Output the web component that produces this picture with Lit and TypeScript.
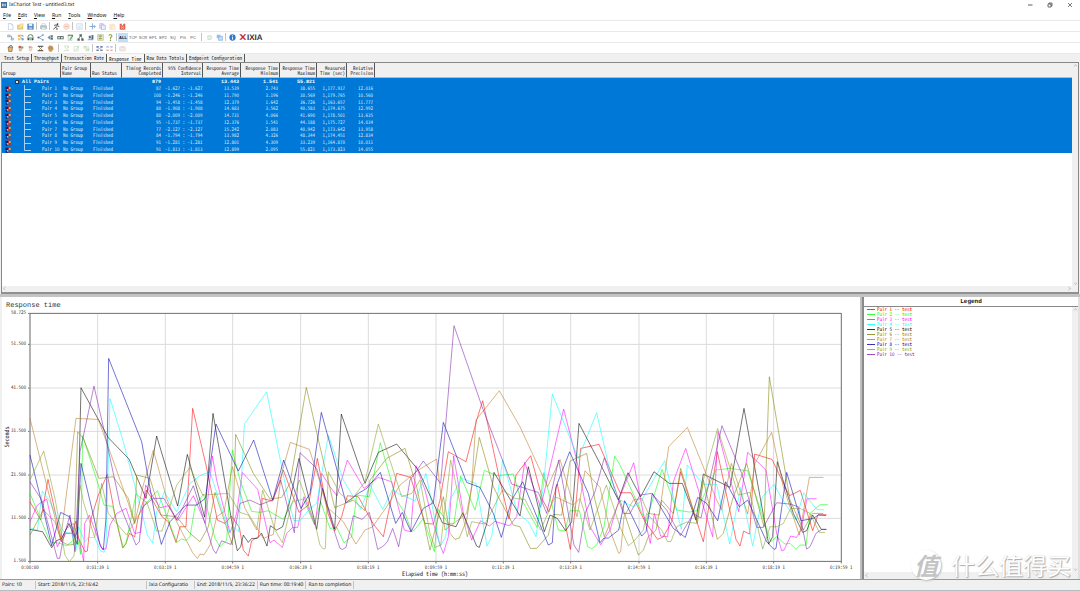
import { LitElement, html, svg, css } from "lit";
import { customElement, property, state } from "lit/decorators.js";

/* ---------- icons, drawn on a 20 x 20 grid ---------- */
const ICONS: Record<string, unknown> = {
  newFile: svg`<path d="M4 1h8l5 5v13H4z" fill="#fdfeff" stroke="#9fb6d6" stroke-width="1.5"/><path d="M12 1v5h5" fill="#cfe0f5" stroke="#9fb6d6"/>`,
  open: svg`<path d="M1 6h6l2 2h8v10H1z" fill="#f3d57c" stroke="#c9a23c"/><path d="M8 3l10-1-2 9-12 6z" fill="#f9e7a8" stroke="#d6b45a"/>`,
  save: svg`<path d="M1 2h18v17H1z" fill="#4d84bd"/><path d="M5 2h10v7H5z" fill="#e6f0fa"/><path d="M5 12h10v7H5z" fill="#a8c5e2"/>`,
  print: svg`<path d="M5 2h10v6H5z" fill="#fff" stroke="#8c9bb0"/><path d="M1 8h18v8H1z" fill="#c3cbd6" stroke="#7c8aa0"/><path d="M4 12h12v6H4z" fill="#e8f4ea" stroke="#7fb58b"/>`,
  run: svg`<circle cx="13" cy="3" r="2.4" fill="#333"/><path d="M3 7l7-2 3 4 5 1M11 7l-4 6 5 2-1 5M7 13l-6 5" fill="none" stroke="#333" stroke-width="2.2"/>`,
  stop: svg`<circle cx="10" cy="10" r="8" fill="#fbe3dd" stroke="#f6c8bd" stroke-width="2.2"/><path d="M5 10h10" stroke="#f4b9ab" stroke-width="3"/>`,
  sheet: svg`<path d="M2 2h16v16H2z" fill="#f3f8fd" stroke="#b9cfe6" stroke-width="1.5"/><path d="M5 7l4 4 6-6M5 14h10" fill="none" stroke="#c3d6ea" stroke-width="1.6"/>`,
  cut: svg`<path d="M10 1v9M1 10h17M14 6l4 4-4 4M10 10v8" fill="none" stroke="#85a8d6" stroke-width="2.6"/>`,
  copy: svg`<path d="M2 2h10v13H2z" fill="#e4e6fa" stroke="#8c91cf" stroke-width="1.4"/><path d="M7 6h11v13H7z" fill="#eef0fd" stroke="#8c91cf" stroke-width="1.4"/>`,
  paste: svg`<path d="M2 4h14v14H2z" fill="#fbe9cf" stroke="#f2d3a5"/><path d="M8 9h10v9H8z" fill="#fff3e2" stroke="#f0cfa0"/>`,
  del: svg`<path d="M2 2h6v5h4V2h6v17H2z" fill="#e2604c"/><path d="M5 9l10 8M15 9L5 17" stroke="#f9d6cf" stroke-width="1.6"/>`,
  pair: svg`<path d="M2 3h6v5H2zM12 12h6v5h-6zM8 6h5v6" fill="none" stroke="#6f8cad" stroke-width="2"/>`,
  multi: svg`<path d="M2 2h8v6H2z" fill="#f0b45c"/><path d="M8 7l8 8M10 4h7v5" stroke="#5f86ba" stroke-width="2" fill="none"/><path d="M3 12h7v6H3z" fill="#f3c36f"/><path d="M13 12h6v6h-6z" fill="#6b9bd0"/>`,
  voip: svg`<path d="M3 16V8a7 6 0 0 1 14 0v8" fill="none" stroke="#55735f" stroke-width="2.6"/><path d="M6 9h8v9H6z" fill="#9bbfa5"/><path d="M2 12h4v6H2zM14 12h4v6h-4z" fill="#3c4d52"/>`,
  share: svg`<path d="M17 3L5 10l12 7" fill="none" stroke="#6a84a8" stroke-width="2"/><circle cx="4" cy="10" r="3" fill="#54739e"/><path d="M14 1h5v5h-5zM14 14h5v5h-5z" fill="#8aa4c4"/>`,
  speaker: svg`<path d="M1 10l9-7v14z" fill="#6d9a9a"/><path d="M11 4h6v12h-6z" fill="#3f5963"/><path d="M13 7h3v5h-3z" fill="#fff"/>`,
  cam: svg`<path d="M1 6h18v9H1z" fill="#52645f"/><circle cx="6" cy="10.500" r="3" fill="#d7e6df"/><circle cx="14" cy="10.500" r="3" fill="#d7e6df"/>`,
  edit: svg`<path d="M2 2h15v4H2z" fill="#5d7e62"/><path d="M3 5h11v14H3z" fill="#eef4ef" stroke="#879b8b"/><path d="M17 5l-9 11" stroke="#55a05d" stroke-width="3"/>`,
  hier: svg`<path d="M7 1h7v6H7zM1 13h7v6H1zM12 13h7v6h-7z" fill="#4c6d59"/><path d="M10 6L4 14M11 6l5 8" stroke="#57636c" stroke-width="2"/>`,
  bars: svg`<path d="M1 17l6-5 4 2 7-11v15H1z" fill="#9ab3cc"/><path d="M5 5h6v7H5zM13 3h5v12h-5z" fill="#54708c"/>`,
  swap: svg`<path d="M2 2h16v16H2z" fill="#e3efd2" stroke="#96b269" stroke-width="1.5"/><path d="M5 6h9M5 13h9" stroke="#dd8a63" stroke-width="3"/><path d="M9 4v12" stroke="#73a949" stroke-width="2"/>`,
  help: svg`<path d="M5 5q5-7 9 0-1 4-4 5v4" fill="none" stroke="#9ead4b" stroke-width="3.4"/><circle cx="10" cy="17.500" r="2" fill="#6b7a3a"/>`,
  globe: svg`<circle cx="10" cy="10" r="8" fill="#e6f3ea"/><path d="M3 8q7-6 14 0M4 14q6 4 12-1" fill="none" stroke="#b7d9c3" stroke-width="2"/>`,
  copyNet: svg`<path d="M2 2h11v10H2z" fill="#9dc0e8"/><path d="M7 7h12v11H7z" fill="#c4dcf4" stroke="#6c9dd4" stroke-width="1.5"/>`,
  info: svg`<circle cx="10" cy="10" r="9" fill="#2f7cc8"/><path d="M10 4v3M10 9v7" stroke="#fff" stroke-width="2.6"/>`,
  clipA: svg`<path d="M3 6h13l-2 13H5z" fill="#e8b765" stroke="#5e4527" stroke-width="1.5"/><path d="M5 5l6-4 5 4" fill="none" stroke="#4d3b2a" stroke-width="2.4"/>`,
  clipB: svg`<path d="M4 10h11l-2 8H6z" fill="#dbb99a"/><circle cx="8" cy="6" r="4" fill="#c8584c"/><path d="M12 4h6v6h-6z" fill="#67a868"/>`,
  clipC: svg`<path d="M4 9h12l-2 9H6z" fill="#ead8c2"/><circle cx="8" cy="6" r="3.500" fill="#e39b8b"/><path d="M12 3l5 4-5 3z" fill="#a7c77b"/>`,
  gridX: svg`<path d="M2 2h16v4H2zM2 14h16v4H2z" fill="#56606f"/><path d="M5 5l10 10M15 5L5 15" stroke="#c2883e" stroke-width="2.6"/>`,
  hand: svg`<path d="M3 7l4-5 9 2 2 8-6 7-6-2z" fill="#d9a24a" stroke="#8c6634"/><path d="M8 5v7M12 5v7" stroke="#7b5c9c" stroke-width="1.500"/>`,
  fadeA: svg`<path d="M2 3h15M2 16h15M4 5l11 10" stroke="#cbdcc4" stroke-width="2.4" fill="none"/><path d="M12 4h5v5h-5z" fill="#e3d9c9"/>`,
  fadeB: svg`<path d="M3 4h12v13H3z" fill="none" stroke="#cfdccb" stroke-width="2"/><path d="M17 3L7 15" stroke="#b9d4b2" stroke-width="2.4"/>`,
  fadeC: svg`<path d="M2 3h9v6H2zM8 11h10v6H8z" fill="#dde9d5" stroke="#c3d6ba"/><path d="M15 3v14" stroke="#cbdcc4" stroke-width="2"/>`,
  rowsA: svg`<path d="M1 3h7v5H1zM12 3h7v5h-7zM1 13h7v4H1zM12 13h7v4h-7z" fill="#7683ad"/><path d="M5 10h10" stroke="#a3acc9" stroke-width="1.600"/>`,
  rowsB: svg`<path d="M1 3h7v5H1zM12 3h7v5h-7z" fill="#bfc4dc"/><path d="M1 13h7v4H1zM12 13h7v4h-7z" fill="#e6b7b0"/>`,
  folderOff: svg`<path d="M2 6h16v11H2z" fill="#f3ece6" stroke="#d8cdc6" stroke-width="1.5"/><path d="M5 3h9v4H5z" fill="#e6ddd7"/>`,
};

const icon = (name: string) =>
  html`<svg class="icon" viewBox="0 0 20 20" aria-hidden="true">${ICONS[name]}</svg>`;

type Tool = { icon?: string; text?: string; label?: string; on?: boolean; sep?: "thin" | "wide" };
const I = (name: string, label: string): Tool => ({ icon: name, label });
const T = (text: string, on = false): Tool => ({ text, on });
const S: Tool = { sep: "thin" };
const W: Tool = { sep: "wide" };

const FILE_TOOLS: Tool[] = [
  I("newFile", "New"), I("open", "Open"), I("save", "Save"), S, I("print", "Print"), S,
  I("run", "Run"), I("stop", "Stop"), S, I("sheet", "Poll"), S,
  I("cut", "Cut"), I("copy", "Copy"), I("paste", "Paste"), I("del", "Delete"),
];
const PAIR_TOOLS: Tool[] = [
  I("pair", "Add pair"), I("multi", "Add multicast"), I("voip", "Add VoIP"), I("share", "Add group"),
  I("speaker", "Add audio"), I("cam", "Add video"), I("edit", "Edit"), I("hier", "Hierarchy"),
  I("bars", "Chart"), I("swap", "Swap endpoints"), I("help", "Help"), S,
  T("ALL", true), T("TCP"), T("SCR"), T("EP1"), T("EP2"), T("SQ"), T("PG"), T("PC"), W,
  I("globe", "Network"), I("copyNet", "Copy network"), S, I("info", "About"),
];
const RUN_TOOLS: Tool[] = [
  I("clipA", "Pack"), I("clipB", "Mark"), I("clipC", "Unmark"), I("gridX", "Clear grid"), I("hand", "Move"), W,
  I("fadeA", "Enable"), I("fadeB", "Disable"), I("fadeC", "Group"), S,
  I("rowsA", "Expand"), I("rowsB", "Collapse"), S, I("folderOff", "Archive"),
];

/* ---------- table ---------- */
const COLUMNS = [
  "Group", "Pair Group\nName", "Run Status", "Timing Records\nCompleted", "95% Confidence\nInterval",
  "Response Time\nAverage", "Response Time\nMinimum", "Response Time\nMaximum", "Measured\nTime (sec)", "Relative\nPrecision",
];
const ROWS = [
  ["87", "-1.627 : -1.627", "13.539", "2.743", "38.655", "1,177.917", "12.016"],
  ["100", "-1.246 : -1.246", "11.790", "3.196", "30.569", "1,179.765", "10.560"],
  ["94", "-1.458 : -1.458", "12.379", "1.642", "36.726", "1,163.657", "11.777"],
  ["80", "-1.908 : -1.908", "14.683", "3.562", "40.583", "1,174.675", "12.992"],
  ["80", "-2.009 : -2.009", "14.731", "4.066", "41.690", "1,178.501", "13.635"],
  ["95", "-1.737 : -1.737", "12.376", "1.541", "44.188", "1,175.727", "14.034"],
  ["77", "-2.127 : -2.127", "15.242", "2.083", "40.942", "1,173.642", "13.958"],
  ["84", "-1.794 : -1.794", "13.982", "4.326", "48.344", "1,174.451", "12.834"],
  ["91", "-1.281 : -1.281", "12.801", "4.309", "33.239", "1,164.870", "10.011"],
  ["91", "-1.813 : -1.813", "12.899", "2.095", "55.821", "1,173.823", "14.055"],
];

/* ---------- chart series: 13 units per second of response time ---------- */
const SERIES = [
  { color: "#ff0000", points: "90,605 122,660 144,538 185,725 197,700 215,700 228,663 236,715 255,755 262,753 272,660 295,585 322,523 345,645 368,743 378,730 388,700 404,710 414,655 440,570 486,650 505,665 528,727 540,680 558,680 578,325 618,495 652,660 675,670 694,648 718,682 730,750 745,768 755,722 775,710 787,595 818,603 850,510 897,637 925,615 952,475 984,640 1004,693 1025,650 1042,587 1075,590 1120,672 1150,710 1190,520 1232,532 1275,670 1300,672 1320,600 1345,455 1398,485 1430,360 1448,302 1465,380 1495,520 1527,657 1548,525 1592,467 1628,600 1647,635 1672,552 1711,748 1730,590 1742,445 1797,433 1860,578 1893,578 1935,665 1973,718 1990,710 2015,665 2042,515 2110,725 2152,455 2208,718 2220,738 2231,693 2249,702 2264,462 2316,478 2368,587 2401,571 2438,692 2454,644 2480,644" },
  { color: "#00ff00", points: "90,580 150,725 180,730 200,737 232,710 242,763 248,407 295,555 312,615 338,619 370,743 378,730 408,582 440,607 472,572 530,727 545,717 558,721 570,710 585,620 610,582 645,715 660,740 680,720 697,450 720,540 755,634 780,637 805,632 850,658 878,605 910,597 943,673 962,605 990,685 1010,682 1032,728 1055,710 1070,585 1108,590 1141,428 1190,600 1215,640 1235,695 1245,688 1270,655 1303,755 1315,628 1345,670 1362,670 1382,528 1425,630 1453,511 1490,527 1540,522 1560,590 1611,682 1631,518 1675,690 1695,693 1710,632 1738,632 1763,740 1775,746 1790,735 1812,680 1844,468 1860,495 1938,665 1986,508 2030,630 2068,636 2090,632 2148,510 2190,505 2243,512 2285,640 2312,725 2330,710 2355,732 2370,730 2388,748 2400,735 2418,735 2430,640 2460,614 2484,614" },
  { color: "#ff00ff", points: "90,665 112,615 140,597 172,740 200,685 220,670 236,715 251,783 254,670 268,645 305,745 318,747 330,675 350,640 378,625 404,700 422,697 437,555 480,623 506,617 533,662 580,587 616,670 637,468 650,540 690,698 710,640 727,517 773,568 810,728 822,720 847,742 860,700 878,682 893,682 912,590 945,675 965,520 990,560 1011,587 1042,480 1092,565 1135,532 1175,545 1213,690 1232,695 1248,497 1275,570 1300,670 1322,740 1330,760 1345,710 1361,468 1390,640 1415,720 1442,662 1468,678 1485,664 1528,677 1550,650 1574,487 1622,622 1691,327 1730,480 1770,680 1802,734 1830,690 1860,590 1901,488 1930,640 1951,730 1963,640 1982,708 2003,710 2020,545 2057,445 2138,710 2154,395 2216,635 2243,457 2298,510 2330,700 2345,752 2352,750 2372,708 2390,712 2403,690 2421,596 2450,596" },
  { color: "#00ffff", points: "90,683 112,691 127,573 150,605 190,695 215,700 228,750 236,680 255,725 265,712 285,713 300,750 312,757 318,740 330,295 370,425 430,655 442,705 458,729 470,635 493,575 530,635 570,550 600,527 630,515 688,698 700,680 716,695 733,372 800,275 830,425 865,600 882,662 900,662 930,625 950,610 985,405 1030,540 1082,627 1110,555 1148,628 1178,568 1195,580 1245,602 1278,520 1320,740 1337,710 1350,600 1385,535 1428,550 1461,738 1475,710 1508,480 1553,640 1585,665 1608,710 1630,560 1657,282 1735,475 1790,338 1845,580 1860,600 1900,620 1922,605 1994,482 2044,688 2062,495 2110,553 2150,553 2189,732 2222,562 2258,738 2287,590 2322,553 2345,595 2388,660 2411,578 2450,628 2472,630" },
  { color: "#000000", points: "90,688 128,695 155,743 168,723 185,715 207,670 232,733 243,263 325,413 387,477 438,595 470,408 533,618 562,463 614,651 639,340 705,720 712,752 722,740 730,705 745,727 755,715 772,715 785,700 801,738 811,677 830,690 848,680 870,600 897,475 950,688 967,565 1004,687 1024,342 1095,550 1135,457 1190,432 1255,510 1327,668 1368,680 1388,638 1430,738 1438,742 1462,665 1482,517 1560,647 1585,500 1633,695 1650,645 1672,655 1697,692 1715,665 1737,370 1800,490 1855,600 1884,518 1922,590 1962,515 2008,550 2047,550 2088,660 2110,522 2190,562 2232,325 2306,732 2318,710 2332,485 2380,640 2408,697 2420,692 2438,645 2464,688 2480,688" },
  { color: "#808000", points: "90,705 130,630 165,665 185,725 205,735 222,733 233,395 250,415 297,535 340,530 385,595 404,670 410,525 450,535 483,645 530,650 570,700 600,725 625,680 645,577 697,735 707,403 760,520 810,597 845,592 870,550 919,262 960,440 1004,623 1060,600 1095,632 1110,540 1160,475 1215,445 1250,560 1290,750 1330,590 1350,700 1365,718 1378,714 1400,660 1438,412 1480,560 1500,600 1540,675 1560,680 1591,745 1610,745 1645,705 1660,643 1685,645 1710,483 1760,460 1785,600 1813,710 1860,600 1915,765 1930,750 1945,710 1968,690 1985,600 2020,640 2042,505 2092,670 2110,540 2152,718 2170,700 2200,590 2240,490 2292,680 2308,230 2370,600 2410,690 2437,640 2470,640" },
  { color: "#b87820", points: "90,355 150,595 182,720 190,655 228,355 295,358 330,455 385,610 404,670 430,555 460,450 500,595 530,665 578,758 592,775 600,762 612,764 630,735 650,650 672,635 697,500 735,625 790,715 820,703 845,520 871,427 928,448 955,530 980,620 1030,665 1068,732 1095,690 1118,680 1160,620 1200,555 1255,510 1310,477 1335,690 1400,640 1415,560 1428,360 1498,272 1560,380 1643,560 1680,478 1695,530 1731,650 1755,512 1800,562 1830,690 1856,760 1862,755 1872,650 1900,600 1925,595 1945,640 1978,645 2006,440 2062,382 2150,600 2165,630 2194,490 2243,642 2265,490 2315,397 2350,560 2398,705 2428,532 2470,532" },
  { color: "#0000b0", points: "90,465 128,620 155,737 182,637 208,650 225,710 232,695 243,490 280,645 300,735 310,750 318,655 326,175 425,425 470,675 484,733 510,665 558,615 590,615 616,595 648,372 715,513 761,420 818,600 851,480 903,625 930,580 964,337 1038,608 1075,580 1100,565 1141,517 1187,670 1207,637 1233,695 1270,625 1300,608 1330,367 1400,547 1440,562 1480,640 1504,712 1535,600 1568,545 1645,735 1657,728 1668,560 1709,455 1765,580 1800,728 1812,714 1825,714 1856,690 1874,602 1925,708 1938,695 1957,580 2020,685 2056,712 2093,592 2120,610 2153,662 2177,545 2218,620 2243,600 2300,725 2322,748 2328,745 2360,517 2403,662 2440,655 2455,645 2478,646" },
  { color: "#80a020", points: "90,540 131,453 165,595 195,765 208,785 222,767 240,555 250,605 284,712 305,550 325,640 350,670 380,705 410,655 440,605 470,693 486,693 530,555 570,502 608,585 685,580 720,637 745,645 770,690 788,570 825,690 847,728 870,630 898,540 945,670 960,735 970,747 976,745 985,515 1020,580 1050,605 1095,545 1135,372 1205,590 1235,580 1260,540 1290,700 1305,742 1322,735 1352,480 1402,710 1415,665 1455,672 1507,570 1545,595 1575,598 1622,690 1665,590 1720,615 1740,595 1770,690 1819,555 1860,680 1885,737 1900,725 1930,690 1940,640 1985,690 2003,725 2013,724 2030,680 2060,666 2090,670 2110,540 2153,385 2215,585 2250,577 2288,747 2310,680 2332,680 2350,670 2372,625 2400,625 2430,640 2458,697 2475,697" },
  { color: "#8020b0", points: "90,545 125,600 172,775 179,775 190,715 210,645 225,755 240,455 282,258 320,425 360,615 408,735 418,725 428,620 460,595 492,595 530,660 580,557 640,750 648,760 665,722 692,733 700,710 720,610 750,600 780,614 818,600 842,540 883,698 900,458 950,505 1005,700 1020,745 1028,748 1038,742 1060,647 1086,658 1108,637 1133,748 1150,738 1162,725 1178,685 1196,740 1230,540 1270,483 1322,550 1362,77 1448,325 1535,552 1615,577 1640,640 1676,480 1722,735 1736,757 1755,640 1785,575 1813,473 1870,640 1890,640 1920,585 1955,580 2000,630 2041,707 2080,640 2103,654 2166,377 2225,520 2270,682 2290,682 2330,608 2370,612 2395,620 2420,747 2430,740 2448,700 2465,688 2478,688" },
];
const Y_TICKS: [string, number][] = [
  ["58.725", 40], ["51.500", 133], ["41.500", 264], ["31.500", 394], ["21.500", 525], ["11.500", 655], ["1.500", 784],
];
const X_TICKS: [string, number][] = [
  ["0:00:00", 90], ["0:01:39 1", 293], ["0:03:19 1", 496], ["0:04:59 1", 698], ["0:06:39 1", 902], ["0:08:19 1", 1105],
  ["0:09:59 1", 1308], ["0:11:39 1", 1510], ["0:13:19 1", 1712], ["0:14:59 1", 1917], ["0:16:39 1", 2119],
  ["0:18:19 1", 2321], ["0:19:59 1", 2524],
];

const base = css`
  * { box-sizing: border-box; }
  button { font: inherit; color: inherit; border: 0; padding: 0; margin: 0; background: none; }
  .mono { font-family: "Noto Sans CJK SC", "Liberation Mono", monospace; font-feature-settings: "hwid"; font-size: 5px; }
`;

@customElement("tool-strip")
export class ToolStrip extends LitElement {
  @property({ attribute: false }) tools: Tool[] = [];
  static styles = [base, css`
    :host { display: flex; align-items: center; height: 11px; padding-left: 5px; background: #fff; border-bottom: 1px solid #e9e9e9; }
    .tool { display: flex; align-items: center; justify-content: center; width: 10px; height: 9px; color: #555; font-family: "Liberation Sans", sans-serif; font-size: 4px; }
    .tool.on { background: #bfe0fa; color: #223; font-weight: bold; }
    .icon { width: 7px; height: 7px; display: block; }
    .thin, .wide { display: flex; justify-content: center; width: 3px; height: 8px; }
    .wide { width: 6px; }
    .thin::before, .wide::before { content: ""; width: 1px; background: #c4c4c4; }
  `];
  render() {
    return html`${this.tools.map((t) => t.sep
      ? html`<span class=${t.sep}></span>`
      : html`<button class="tool ${t.on ? "on" : ""}" aria-label=${t.label ?? t.text}>${t.icon ? icon(t.icon) : t.text}</button>`)}<slot></slot>`;
  }
}

@customElement("pair-table")
export class PairTable extends LitElement {
  static styles = [base, css`
    :host { display: block; }
    table { width: 100%; border-collapse: separate; border-spacing: 0; table-layout: fixed; line-height: 5px; }
    th, td { padding: 0 2px; white-space: pre; overflow: hidden; font-weight: normal; text-align: left; vertical-align: middle; }
    th { height: 15px; padding: 0 1px 1px; background: #f0f0f0; color: #222; vertical-align: bottom; border-right: 1px solid #555; border-bottom: 1px solid #bbb; }
    th:last-child { border-right: 0; }
    th.num, td.num { text-align: right; }
    tbody { background: #0078d7; color: #dcecfa; }
    tbody tr { height: 7px; }
    tbody tr:nth-child(4n) { height: 6px; }
    .total td { color: #fff; font-weight: bold; font-family: "Liberation Mono", monospace; padding-top: 1px; }
    .group { display: grid; grid-template-columns: 19px 19px auto; align-items: center; }
    .head { display: grid; grid-template-columns: 11px 7px auto; align-items: center; }
    .box { width: 4px; height: 4px; border: 1px solid #333; background: #dde; grid-column: 2; }
    .pc { width: 6px; height: 6px; display: block; margin-left: 1px; }
    .tree { width: 9px; height: 6px; display: block; }
    .c1 { width: 59px; } .c2 { width: 30px; } .c3 { width: 31px; } .c4 { width: 41px; } .c5 { width: 40px; }
    .c6 { width: 38px; } .c7 { width: 39px; } .c8 { width: 37px; } .c9 { width: 30px; } .c10 { width: 28px; }
  `];
  render() {
    return html`<table class="mono">
      <colgroup>${COLUMNS.map((_, i) => html`<col class="c${i + 1}">`)}<col></colgroup>
      <thead><tr>${COLUMNS.map((c, i) => html`<th class=${i > 2 ? "num" : ""} scope="col">${c}</th>`)}<th></th></tr></thead>
      <tbody>
        <tr class="total"><td><div class="head"><span class="box"></span><span>All Pairs</span></div></td><td></td><td></td>
          <td class="num">879</td><td></td><td class="num">13.443</td><td class="num">1.541</td><td class="num">55.821</td><td></td><td></td><td></td></tr>
        ${ROWS.map((r, i) => html`<tr>
          <td><div class="group">
            <svg class="pc" viewBox="0 0 18 18" aria-hidden="true"><path d="M1 2h8v8H1zM2 12h6v5H2z" fill="#12206e"/><path d="M9 1h4v8H9zM10 11h7v6h-7z" fill="#c22b2b"/><path d="M12 3h5v6h-5zM6 9h4v5H6z" fill="#e0b13a"/></svg>
            <svg class="tree" viewBox="0 0 9 6" overflow="visible" aria-hidden="true"><path d=${i === 9 ? "M1.500 -1V3.500H8" : "M1.500 -1V7M1.500 3.500H8"} fill="none" stroke="#a9d1f3"/></svg>
            <span>Pair ${i + 1}</span></div></td>
          <td>No Group</td><td>Finished</td>${r.map((v) => html`<td class="num">${v}</td>`)}<td></td></tr>`)}
      </tbody>
    </table>`;
  }
}

@customElement("response-chart")
export class ResponseChart extends LitElement {
  static styles = [base, css`
    :host { display: block; background: #fff; min-width: 0; min-height: 0; }
    .chart { display: block; width: 100%; height: 100%; }
    .title { font-family: "Liberation Mono", monospace; font-size: 7px; fill: #333; }
    .tick { font-family: "Noto Sans CJK SC", monospace; font-feature-settings: "hwid"; font-size: 5px; fill: #333; }
    .axis { font-family: "Noto Sans CJK SC", monospace; font-feature-settings: "hwid"; font-size: 6px; fill: #222; }
    .end { text-anchor: end; }
    .mid { text-anchor: middle; }
    .line { fill: none; stroke-width: 3; stroke-opacity: 0.55; stroke-linejoin: round; }
    .grid { stroke: #dcdcdc; stroke-width: 3; }
    .frame { fill: none; stroke: #777; stroke-width: 3; }
  `];
  render() {
    const px = (v: number) => v / 3;
    return html`<svg class="chart" viewBox="2 297 858 282" role="img" aria-label="Response time">
      <text class="title" x="6" y="307">Response time</text>
      <g transform="translate(0 300) scale(0.333333)">
        ${Y_TICKS.map(([, y]) => svg`<path class="grid" d="M90 ${y}H2524"/><path class="frame" d="M84 ${y}H90"/>`)}
        ${X_TICKS.map(([, x]) => svg`<path class="grid" d="M${x} 40V784"/><path class="frame" d="M${x} 784V790"/>`)}
        <rect class="frame" x="90" y="40" width="2434" height="744"></rect>
        ${SERIES.map((s) => svg`<polyline class="line" stroke=${s.color} points=${s.points}/>`)}
      </g>
      ${Y_TICKS.map(([t, y]) => svg`<text class="tick end" x="26" y=${301 + px(y)}>${t}</text>`)}
      ${X_TICKS.map(([t, x]) => svg`<text class="tick mid" x=${px(x)} y="569">${t}</text>`)}
      <text class="axis mid" x="435" y="576">Elapsed time (h:mm:ss)</text>
      <text class="axis mid" transform="translate(9 437) rotate(-90)">Seconds</text>
    </svg>`;
  }
}

@customElement("app-root")
export class AppRoot extends LitElement {
  @state() private tab = "Response Time";
  static styles = [base, css`
    :host { display: flex; flex-direction: column; height: 100vh; overflow: hidden; background: #f0f0f0; color: #111; position: relative;
      font-family: "Noto Sans", "Open Sans", sans-serif; font-size: 5px; text-rendering: geometricPrecision; }
    .titlebar { display: flex; align-items: center; height: 10px; padding: 0 1px; gap: 2px; background: #fff; flex: none; }
    .appicon { width: 6px; height: 6px; }
    .name { flex: 1; }
    .win { width: 18px; height: 9px; display: flex; align-items: center; justify-content: center; }
    .win svg { width: 6px; height: 6px; }
    .menu { display: flex; align-items: center; height: 11px; gap: 7px; padding-left: 3px; background: #fff; border-bottom: 1px solid #e9e9e9; flex: none; }
    .logo { display: flex; align-items: center; padding-left: 2px; font-family: "Liberation Sans", sans-serif; font-weight: bold; font-size: 8px; line-height: 9px; color: #333; }
    .logo svg { width: 8px; height: 6px; }
    .tabs { display: flex; align-items: flex-start; height: 8px; padding-left: 2px; flex: none; }
    .tab { height: 8px; line-height: 8px; padding: 0 2px; border-right: 1px solid #555; color: #222; }
    .tab.on { line-height: 7px; background: #f8f8f8; }
    .upper { flex: 232 1 0; min-height: 0; display: grid; grid-template-columns: 1fr 6px; grid-template-rows: 1fr 6px; margin: 0 1px 0 1px;
      border: 1px solid #888; border-bottom: 2px solid #909090; background: #fff; }
    .bar { background: #f0f0f0; color: #999; display: flex; justify-content: space-between; align-items: center; }
    .bar.v { flex-direction: column; }
    .bar svg { width: 5px; height: 5px; flex: none; }
    .corner { background: #f0f0f0; }
    .lower { flex: 286 1 0; min-height: 0; display: grid; grid-template-columns: 858fr 4px 216fr; border-top: 3px solid #c4c4c4; border-bottom: 1px solid #999; padding-left: 2px; }
    .split { background: #c0c0c0; border-right: 2px solid #8a8a8a; }
    .legend { display: grid; grid-template-columns: 1fr 6px; grid-template-rows: 10px 1fr 7px; background: #fff; min-width: 0; border-right: 2px solid #e0e0e0; }
    .legend h2 { grid-column: 1 / -1; margin: 0; border-bottom: 1px solid #888; text-align: center; line-height: 9px; font-family: "Liberation Mono", monospace; font-size: 6px; }
    .keys { list-style: none; margin: 0; padding: 0 3px; }
    .keys li { display: flex; align-items: center; gap: 2px; height: 5px; line-height: 5px; }
    .swatch { width: 8px; height: 1px; background: currentColor; opacity: 0.8; }
    .status { display: flex; align-items: center; height: 11px; flex: none; border-bottom: 1px solid #b4bcc2; }
    .status span { padding: 0 2px; border-right: 1px solid #c4c4c4; line-height: 8px; white-space: nowrap; }
    .s1 { width: 36px; } .s2 { width: 111px; } .s3 { width: 48px; }
    .mark { position: absolute; right: 9px; bottom: 11px; display: flex; align-items: center; gap: 10px; color: #fff;
      font-family: "Noto Sans CJK SC", sans-serif; font-size: 24px; line-height: 30px; text-shadow: 1px 1px 1px #aaa, 0 0 1px #ccc; pointer-events: none; }
    .seal { width: 30px; height: 30px; border-radius: 50%; background: #fff; color: #c4c4c4; text-align: center; font-weight: bold; text-shadow: none; box-shadow: 1px 1px 2px #bbb; font-style: italic; }
  `];

  private vbar() {
    return html`<div class="bar v"><svg viewBox="0 0 10 10"><path d="M2 7l3-4 3 4" fill="none" stroke="currentColor"/></svg><svg viewBox="0 0 10 10"><path d="M2 3l3 4 3-4" fill="none" stroke="currentColor"/></svg></div>`;
  }
  private hbar() {
    return html`<div class="bar"><svg viewBox="0 0 10 10"><path d="M7 2L3 5l4 3" fill="none" stroke="currentColor"/></svg><svg viewBox="0 0 10 10"><path d="M3 2l4 3-4 3" fill="none" stroke="currentColor"/></svg></div>`;
  }

  render() {
    const menus = ["File", "Edit", "View", "Run", "Tools", "Window", "Help"];
    const tabs = ["Test Setup", "Throughput", "Transaction Rate", "Response Time", "Raw Data Totals", "Endpoint Configuration"];
    return html`
      <header class="titlebar">
        <svg class="appicon" viewBox="0 0 18 18" aria-hidden="true"><path d="M0 0h18v18H0z" fill="#3f739f"/><path d="M3 5h5v8H3zM10 5h5v3h-5zM10 10h5v3h-5z" fill="#c7dceb"/></svg>
        <span class="name">IxChariot Test - untitled3.txt</span>
        <button class="win" aria-label="Minimize"><svg viewBox="0 0 12 12"><path d="M2 6h9" stroke="#333" stroke-width="1.6"/></svg></button>
        <button class="win" aria-label="Restore"><svg viewBox="0 0 12 12"><path d="M2 4h6v6H2zM4 4V2h6v6H8" fill="none" stroke="#333" stroke-width="1.400"/></svg></button>
        <button class="win" aria-label="Close"><svg viewBox="0 0 12 12"><path d="M2 2l8 8M10 2l-8 8" stroke="#333" stroke-width="1.300"/></svg></button>
      </header>
      <nav class="menu">${menus.map((m) => html`<button><u>${m[0]}</u>${m.slice(1)}</button>`)}</nav>
      <tool-strip .tools=${FILE_TOOLS}></tool-strip>
      <tool-strip .tools=${PAIR_TOOLS}><span class="logo"><svg viewBox="0 0 24 18" aria-hidden="true"><path d="M1 1h6l15 16h-6zM17 1h5L7 17H1z" fill="#c8283c"/></svg>IXIA</span></tool-strip>
      <tool-strip .tools=${RUN_TOOLS}></tool-strip>
      <div class="tabs mono" role="tablist">${tabs.map((t) => html`<button role="tab" class="tab ${t === this.tab ? "on" : ""}" aria-selected=${t === this.tab} @click=${() => (this.tab = t)}>${t}</button>`)}</div>
      <section class="upper"><pair-table></pair-table>${this.vbar()}${this.hbar()}<div class="corner"></div></section>
      <section class="lower">
        <response-chart></response-chart>
        <div class="split"></div>
        <aside class="legend">
          <h2>Legend</h2>
          <ul class="keys mono">${SERIES.map((s, i) => html`<li style="color:${s.color}"><span class="swatch"></span>Pair ${i + 1} -- test</li>`)}</ul>
          ${this.vbar()}${this.hbar()}<div class="corner"></div>
        </aside>
      </section>
      <footer class="status">
        <span class="s1">Pairs: 10</span><span class="s2">Start: 2018/11/5, 23:16:42</span><span class="s3">Ixia Configuratio</span>
        <span>End: 2018/11/5, 23:36:22</span><span>Run time: 00:19:40</span><span>Ran to completion</span>
      </footer>
      <div class="mark"><span class="seal">值</span><span>什么值得买</span></div>`;
  }
}
